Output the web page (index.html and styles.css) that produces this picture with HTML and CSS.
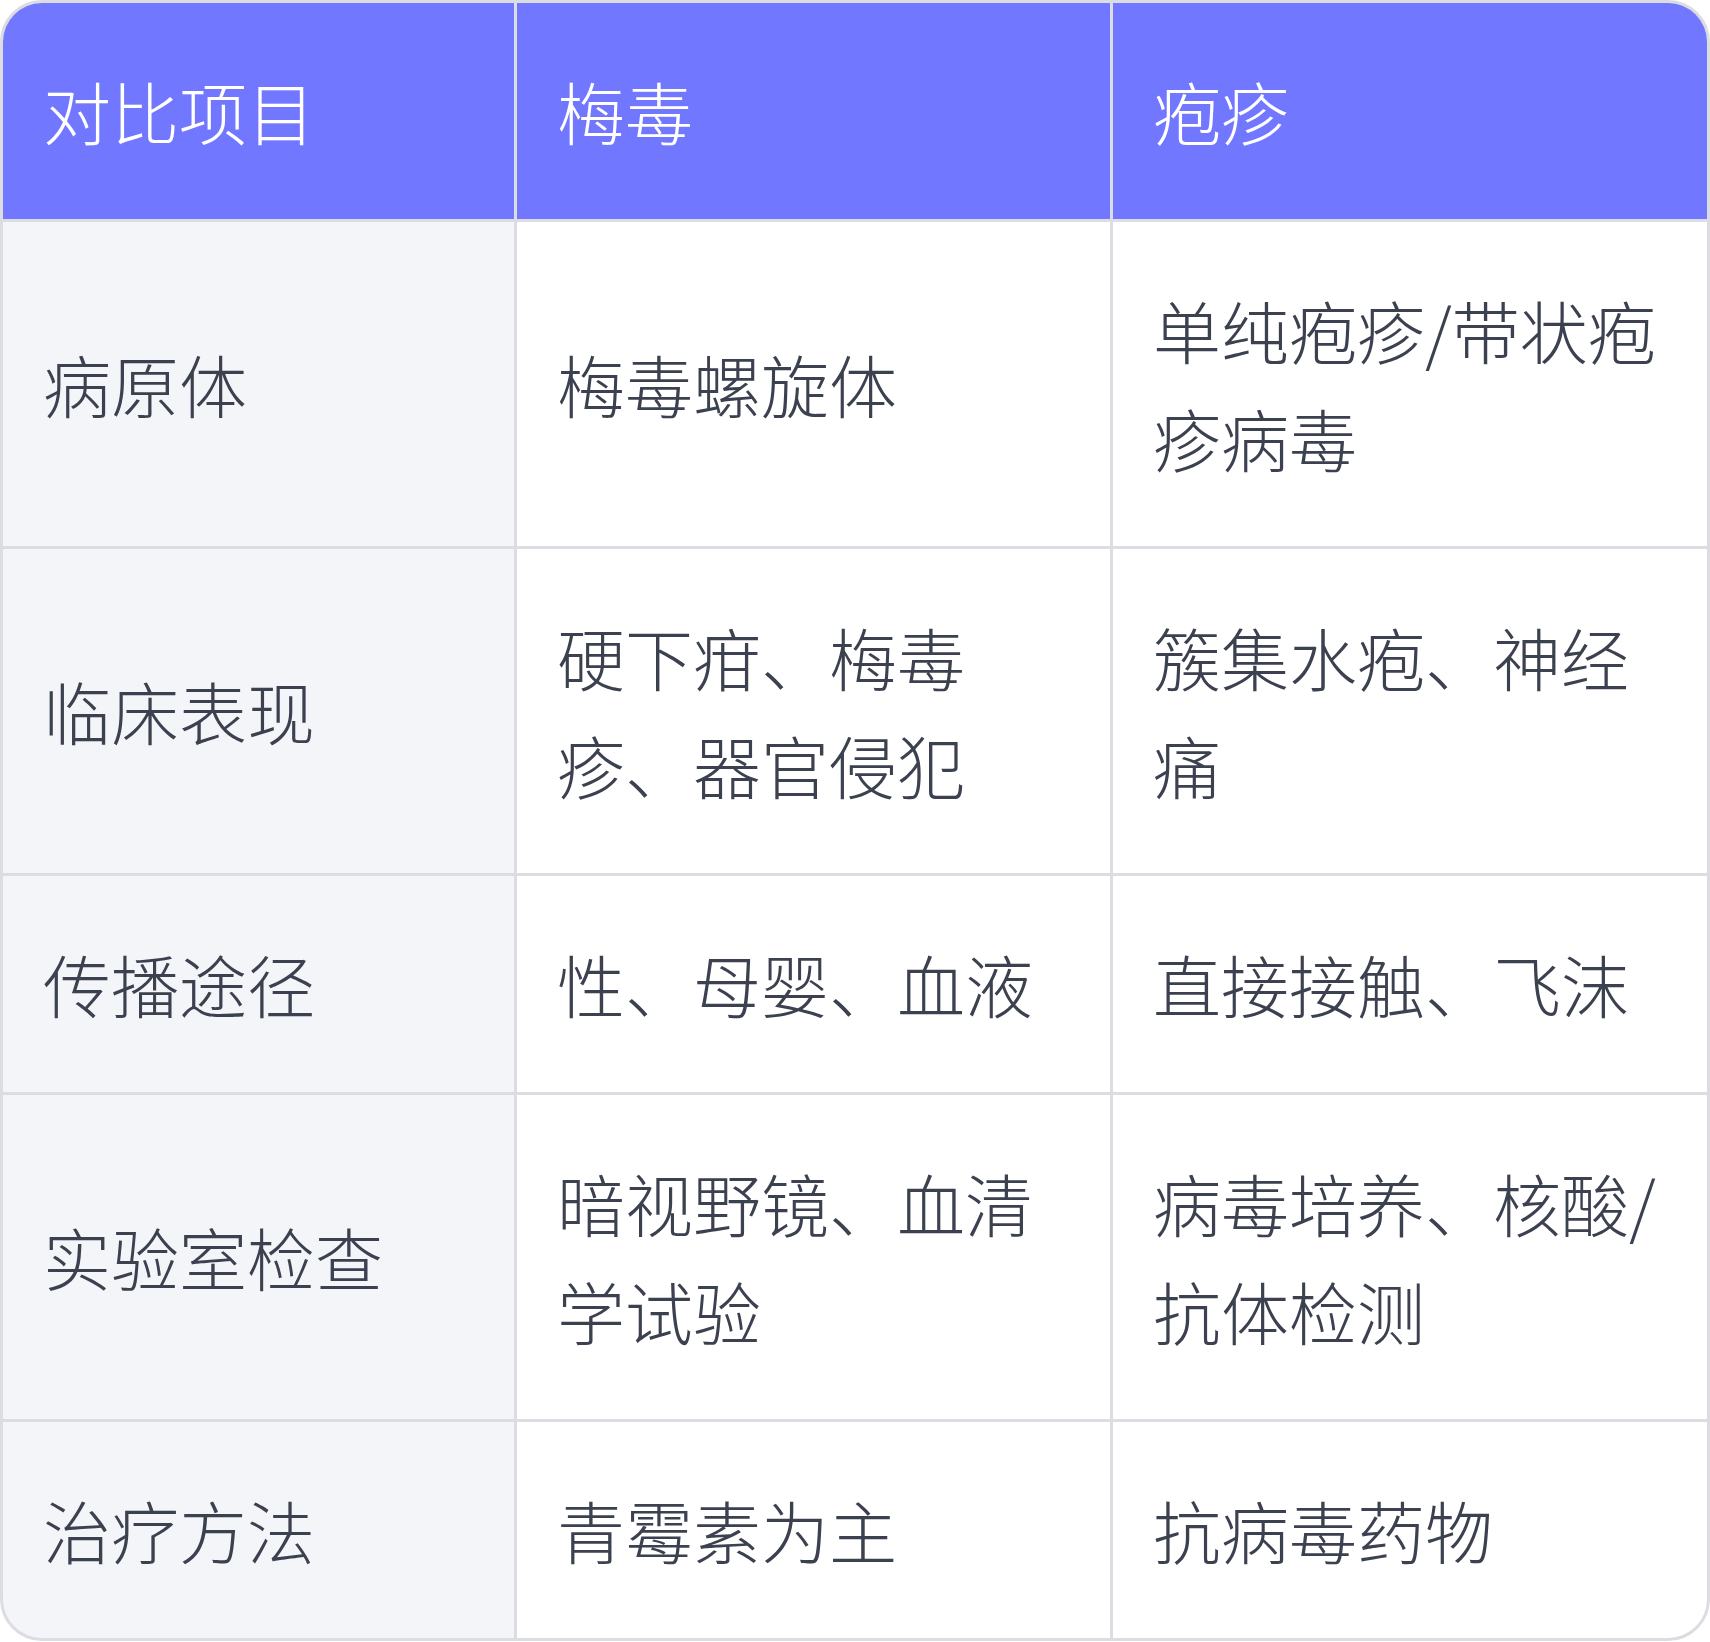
FILE: index.html
```html
<!DOCTYPE html>
<html lang="zh-CN">
<head>
<meta charset="utf-8">
<title>梅毒与疱疹对比</title>
<link rel="stylesheet" href="styles.css">
</head>
<body>
<div class="compare">
  <div class="cell head">对比项目</div>
  <div class="cell head">梅毒</div>
  <div class="cell head">疱疹</div>

  <div class="cell label">病原体</div>
  <div class="cell">梅毒螺旋体</div>
  <div class="cell">单纯疱疹/带状疱疹病毒</div>

  <div class="cell label">临床表现</div>
  <div class="cell">硬下疳、梅毒疹、器官侵犯</div>
  <div class="cell">簇集水疱、神经痛</div>

  <div class="cell label">传播途径</div>
  <div class="cell">性、母婴、血液</div>
  <div class="cell">直接接触、飞沫</div>

  <div class="cell label">实验室检查</div>
  <div class="cell">暗视野镜、血清学试验</div>
  <div class="cell">病毒培养、核酸/抗体检测</div>

  <div class="cell label">治疗方法</div>
  <div class="cell">青霉素为主</div>
  <div class="cell">抗病毒药物</div>
</div>
</body>
</html>
```

FILE: styles.css
```css
html, body {
  margin: 0;
  padding: 0;
  background: #ffffff;
}

.compare {
  display: grid;
  grid-template-columns: 511px 593px 1fr;
  gap: 3px;
  background: #dcdde2;
  border: 3px solid #dcdde2;
  border-radius: 42px;
  overflow: hidden;
  font-family: "Noto Sans CJK SC", "Noto Sans", sans-serif;
  font-size: 68px;
  font-weight: 300;
  line-height: 108px;
  color: #3c4150;
}

.cell {
  display: flex;
  align-items: center;
  padding: 54px 40px;
  background: #ffffff;
}

.cell.head {
  background: #7277ff;
  color: #ffffff;
}

.cell.label {
  background: #f4f5f9;
}
```
